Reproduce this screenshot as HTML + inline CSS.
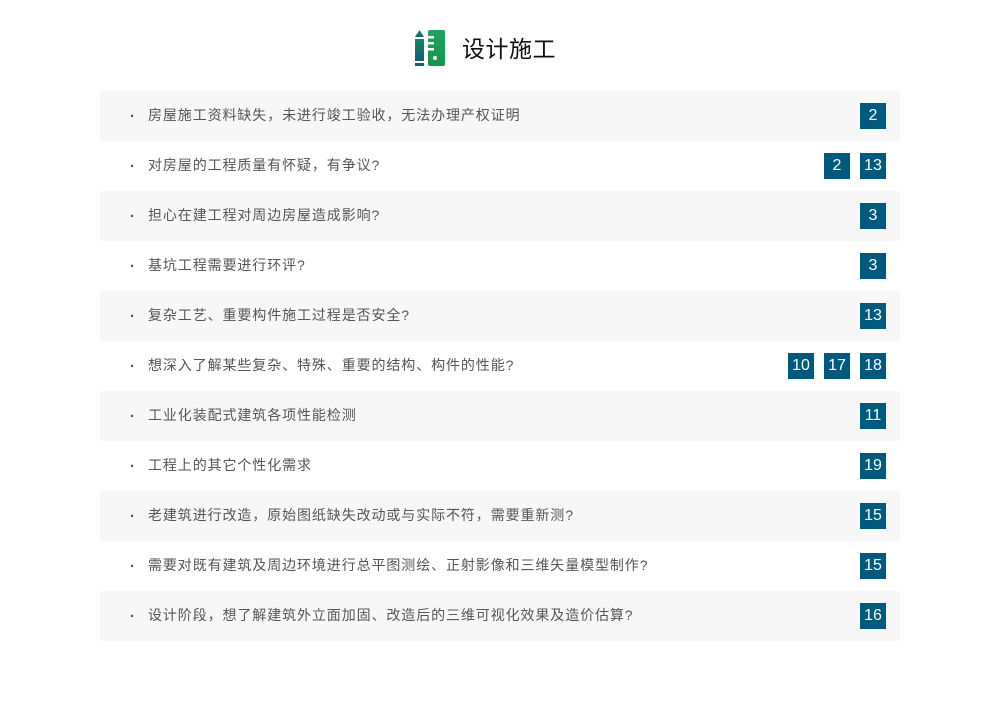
<!DOCTYPE html>
<html><head><meta charset="utf-8"><style>
body{margin:0;background:#fff;font-family:"Liberation Sans","Noto Sans CJK SC",sans-serif;}
.wrap{position:relative;width:1000px;height:710px;}
.title{position:absolute;left:462px;top:34px;font-size:23px;color:#111;line-height:30px;letter-spacing:0.5px;}
.list{position:absolute;left:100px;top:91px;width:800px;}
.row{height:50px;position:relative;}
.row:nth-child(odd){background:#f7f7f7;}
.row .t{position:absolute;left:48px;top:0;line-height:48px;font-size:14px;color:#555;letter-spacing:0.9px;white-space:nowrap;}
.row .d{position:absolute;left:30px;top:0;line-height:51px;font-size:15px;font-weight:bold;color:#555;}
.b{position:absolute;right:14px;top:12px;display:flex;gap:10px;}
.b span{width:26px;height:26px;background:#005a7e;color:#fff;font-size:16px;line-height:26px;text-align:center;}
</style></head><body><div class="wrap">
<svg style="position:absolute;left:414px;top:29px" width="32" height="38" viewBox="0 0 32 38">
<defs><linearGradient id="g" x1="0" y1="0" x2="0" y2="1"><stop offset="0" stop-color="#118a5a"/><stop offset="1" stop-color="#0e5f82"/></linearGradient>
<linearGradient id="h" x1="0" y1="0" x2="0" y2="1"><stop offset="0" stop-color="#21a35b"/><stop offset="1" stop-color="#15964f"/></linearGradient></defs>
<path d="M1 8 L5.5 1 L10 8 Z" fill="url(#g)"/>
<rect x="1" y="10" width="9" height="22" fill="url(#g)"/>
<rect x="1" y="34" width="9" height="3" fill="#0e5f82"/>
<rect x="14" y="1" width="17" height="36" rx="2" fill="url(#h)"/>
<rect x="14" y="7" width="6" height="2.5" fill="#fff"/>
<rect x="14" y="13" width="6" height="2.5" fill="#fff"/>
<rect x="14" y="19" width="6" height="2.5" fill="#fff"/>
<circle cx="21" cy="29" r="2" fill="#fff"/>
</svg>
<div class="title">设计施工</div>
<div class="list">
<div class="row"><span class="d">·</span><span class="t">房屋施工资料缺失，未进行竣工验收，无法办理产权证明</span><div class="b"><span>2</span></div></div>
<div class="row"><span class="d">·</span><span class="t">对房屋的工程质量有怀疑，有争议?</span><div class="b"><span>2</span><span>13</span></div></div>
<div class="row"><span class="d">·</span><span class="t">担心在建工程对周边房屋造成影响?</span><div class="b"><span>3</span></div></div>
<div class="row"><span class="d">·</span><span class="t">基坑工程需要进行环评?</span><div class="b"><span>3</span></div></div>
<div class="row"><span class="d">·</span><span class="t">复杂工艺、重要构件施工过程是否安全?</span><div class="b"><span>13</span></div></div>
<div class="row"><span class="d">·</span><span class="t">想深入了解某些复杂、特殊、重要的结构、构件的性能?</span><div class="b"><span>10</span><span>17</span><span>18</span></div></div>
<div class="row"><span class="d">·</span><span class="t">工业化装配式建筑各项性能检测</span><div class="b"><span>11</span></div></div>
<div class="row"><span class="d">·</span><span class="t">工程上的其它个性化需求</span><div class="b"><span>19</span></div></div>
<div class="row"><span class="d">·</span><span class="t">老建筑进行改造，原始图纸缺失改动或与实际不符，需要重新测?</span><div class="b"><span>15</span></div></div>
<div class="row"><span class="d">·</span><span class="t">需要对既有建筑及周边环境进行总平图测绘、正射影像和三维矢量模型制作?</span><div class="b"><span>15</span></div></div>
<div class="row"><span class="d">·</span><span class="t">设计阶段，想了解建筑外立面加固、改造后的三维可视化效果及造价估算?</span><div class="b"><span>16</span></div></div>
</div>
</div></body></html>
